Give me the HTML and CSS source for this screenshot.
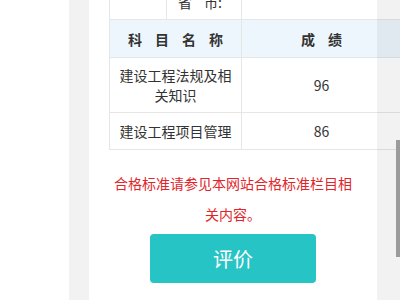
FILE: index.html
```html
<!DOCTYPE html>
<html lang="zh">
<head>
<meta charset="utf-8">
<link rel="stylesheet" href="styles.css">
</head>
<body>
<div class="page">
  <div class="gutter"></div>
  <div class="rail"></div>
  <main class="panel">
    <div class="table">
      <div class="row row-top">
        <div class="cell c-a"></div>
        <div class="cell c-b"><span>省</span><span>市:</span></div>
        <div class="cell c-c"></div>
      </div>
      <div class="row row-head">
        <div class="cell">科目名称</div>
        <div class="cell">成绩</div>
      </div>
      <div class="row row-1">
        <div class="cell">建设工程法规及相<br>关知识</div>
        <div class="cell">96</div>
      </div>
      <div class="row row-2">
        <div class="cell">建设工程项目管理</div>
        <div class="cell">86</div>
      </div>
    </div>
    <p class="note">合格标准请参见本网站合格标准栏目相关内容。</p>
    <button class="btn" type="button">评价</button>
  </main>
  <div class="side">
    <div class="thumb"></div>
  </div>
</div>
</body>
</html>
```
FILE: styles.css
```css
html, body {
  margin: 0;
  padding: 0;
  background: #ffffff;
  overflow: hidden;
}
body {
  font-family: "Noto Sans CJK SC", "Noto Sans", sans-serif;
  color: #333333;
  font-size: 14px;
}
.page {
  display: flex;
  width: 400px;
  height: 300px;
  overflow: hidden;
}
.gutter {
  flex: 0 0 69px;
  background: #ffffff;
}
.rail {
  flex: 0 0 20px;
  background: #f2f2f2;
}
.panel {
  flex: 0 0 268px;
  width: 268px;
  padding-left: 20px;
  background: #ffffff;
  display: flex;
  flex-direction: column;
  align-items: flex-start;
}
.table {
  width: 292px;
  flex: 0 0 auto;
  margin-top: -16px;
  border-left: 1px solid #e6e6e6;
  box-sizing: border-box;
}
.row {
  display: grid;
  grid-template-columns: 132px 159px;
  border-bottom: 1px solid #e6e6e6;
}
.row .cell {
  display: flex;
  align-items: center;
  justify-content: center;
  text-align: center;
  line-height: 20px;
}
.row .cell:first-child {
  border-right: 1px solid #e6e6e6;
}
.row-top {
  grid-template-columns: 57px 75px 159px;
  height: 35px;
}
.row-top .cell {
  border-right: 1px solid #e6e6e6;
}
.row-top .cell.c-c {
  border-right: none;
}
.row-top .c-b {
  gap: 12px;
  justify-content: flex-start;
  padding-left: 11px;
}
.row-head {
  height: 37px;
  background: #edf6fd;
  font-weight: 700;
}
.row-head .cell {
  letter-spacing: 13px;
  padding-left: 13px;
}
.row-1 {
  height: 54px;
}
.row-2 {
  height: 36px;
}
.note {
  align-self: stretch;
  margin: 18px 0 0 -20px;
  padding: 0 24px;
  text-align: center;
  color: #e0262b;
  font-size: 14px;
  line-height: 31px;
}
.btn {
  align-self: center;
  margin: 4px 0 0 -20px;
  width: 166px;
  height: 49px;
  border: none;
  border-radius: 4px;
  background: #27c4c6;
  color: #ffffff;
  font-family: "Noto Sans CJK SC", "Noto Sans", sans-serif;
  font-size: 20px;
  padding: 0;
}
.side {
  flex: 0 0 23px;
  background: rgba(0, 0, 0, 0.05);
  display: flex;
  flex-direction: column;
  align-items: flex-end;
}
.thumb {
  width: 4px;
  height: 117px;
  margin-top: 140px;
  background: #9b9b9b;
}
```
